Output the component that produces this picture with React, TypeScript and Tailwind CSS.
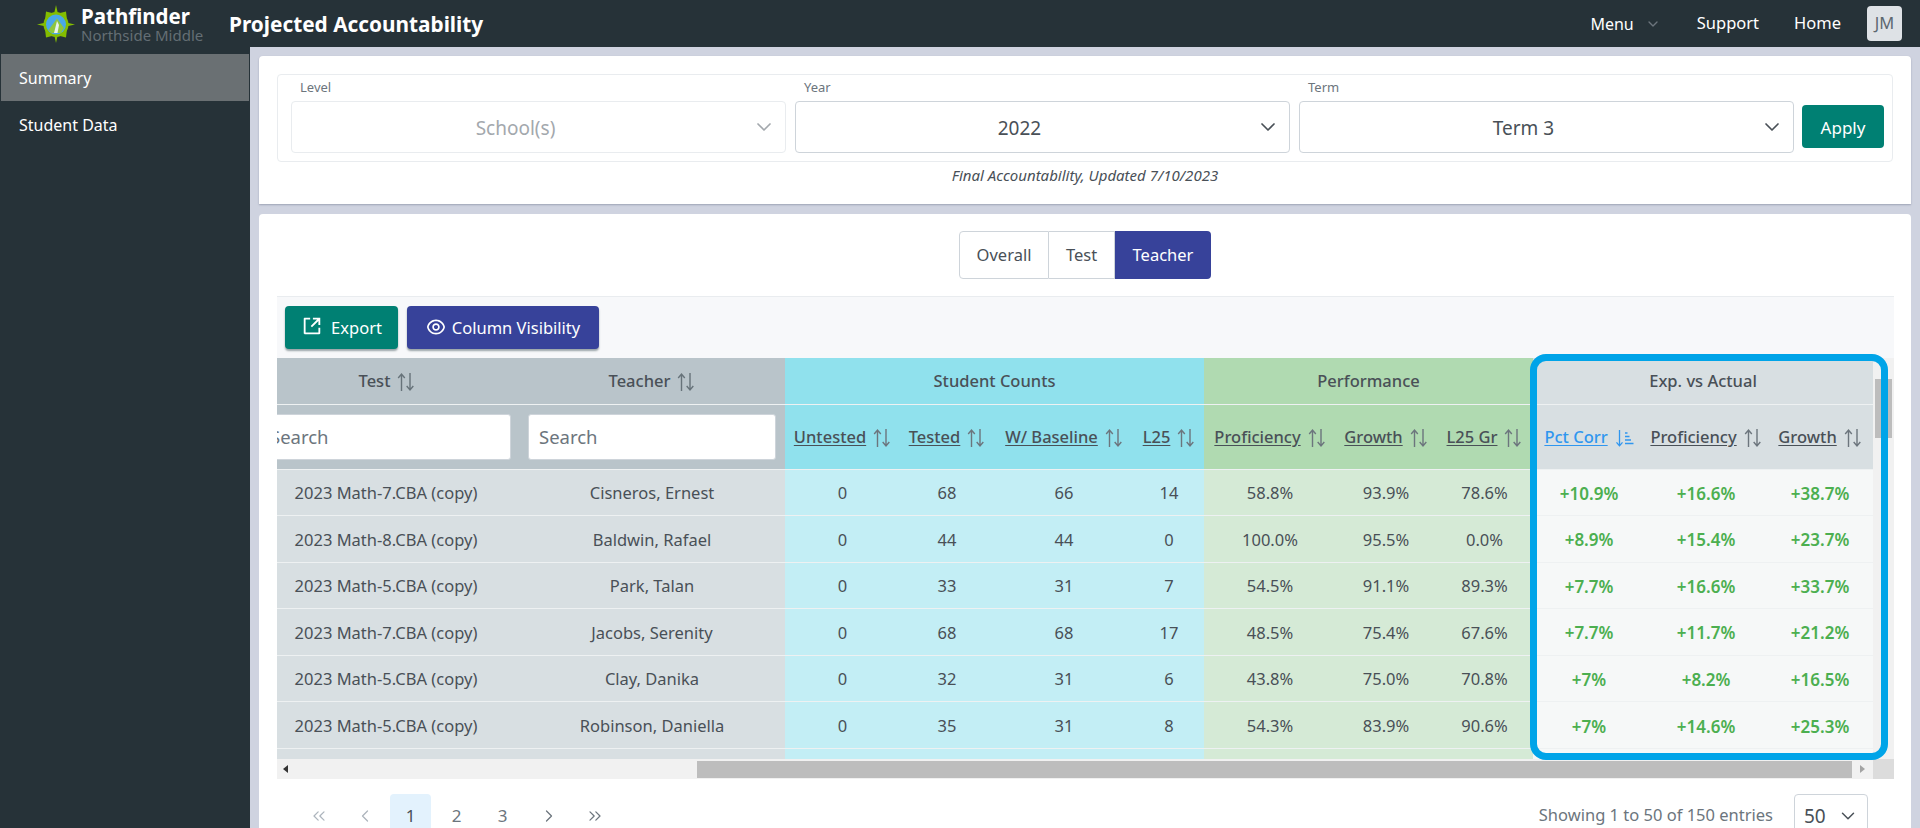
import React from "react";
import { ChevronDown, ChevronLeft, ChevronRight, ChevronsLeft, ChevronsRight } from "lucide-react";
import { RiShareBoxLine, RiEyeLine } from "react-icons/ri";

function SortIcon({ className = "text-[#6c757d]" }: { className?: string }) {
  return (
    <svg width="18" height="20" viewBox="0 0 18 20" fill="none" stroke="currentColor" strokeWidth="1.4" className={className}>
      <path d="M4.500 19V2.500M1.200 6 4.500 2 7.800 6" />
      <path d="M13 1V17.500M9.700 14 13 18 16.300 14" />
    </svg>
  );
}

function SortedIcon() {
  return (
    <svg width="19" height="19" viewBox="0 0 19 19" fill="none" stroke="currentColor" strokeWidth="1.3" className="text-[#2f96ef]">
      <path d="M4.500 2V17.500M1.500 14.300 4.500 17.800 7.500 14.300" />
      <path d="M10 5H12.500M10 8.500H14.500M10 12H16M10 15.500H18.500" />
    </svg>
  );
}

function Logo() {
  return (
    <svg width="38" height="38" viewBox="0 0 38 38">
      <path d="M19 0 21 9H17Z M19 38 21 29H17Z M0 19.500 9 17.500V21.500Z M38 19.500 29 17.500V21.500Z" fill="#84bd00" />
      <path d="M9 6.500 15 8 8 15Z M29 6.500 23 8 30 15Z M9 32.500 15 31 8 24Z M29 32.500 23 31 30 24Z" fill="#84bd00" />
      <circle cx="19" cy="19.500" r="12.500" fill="#84bd00" />
      <circle cx="19" cy="19.500" r="10" fill="#4aa8e8" />
      <path d="M11.500 25 20 13.500 27 23 24 28H14.500Z" fill="#8fc63e" />
      <path d="M17 28 20 16 22 20 20.500 28Z" fill="#e8f2ef" />
    </svg>
  );
}

function Select({ label, value, muted }: { label: string; value: string; muted?: boolean }) {
  return (
    <div className="relative w-[495px] pt-[26px]">
      <span className="absolute left-[9px] top-[2px] text-[13px] leading-5 text-[#6c757d]">{label}</span>
      <div className={`relative flex h-[52px] items-center justify-center rounded border pt-[2px] pr-[46px] text-[19px] ${muted ? "border-[#e9ecef] text-[#a3a8ad]" : "border-[#ced4da] text-[#495057]"}`}>
        {value}
        <ChevronDown size={24} strokeWidth={1.7} className={`absolute right-[9px] top-[13px] ${muted ? "text-[#a3a8ad]" : "text-[#495057]"}`} />
      </div>
    </div>
  );
}

type Col = { w: number; label: string; sorted?: boolean };

const headerCols: Col[] = [
  { w: 115, label: "Untested" },
  { w: 94, label: "Tested" },
  { w: 140, label: "W/ Baseline" },
  { w: 70, label: "L25" },
  { w: 132, label: "Proficiency" },
  { w: 100, label: "Growth" },
  { w: 97, label: "L25 Gr" },
  { w: 112, label: "Pct Corr", sorted: true },
  { w: 122, label: "Proficiency" },
  { w: 106, label: "Growth" },
];

const rows = [
  ["2023 Math-7.CBA (copy)", "Cisneros, Ernest", "0", "68", "66", "14", "58.8%", "93.9%", "78.6%", "+10.9%", "+16.6%", "+38.7%"],
  ["2023 Math-8.CBA (copy)", "Baldwin, Rafael", "0", "44", "44", "0", "100.0%", "95.5%", "0.0%", "+8.9%", "+15.4%", "+23.7%"],
  ["2023 Math-5.CBA (copy)", "Park, Talan", "0", "33", "31", "7", "54.5%", "91.1%", "89.3%", "+7.7%", "+16.6%", "+33.7%"],
  ["2023 Math-7.CBA (copy)", "Jacobs, Serenity", "0", "68", "68", "17", "48.5%", "75.4%", "67.6%", "+7.7%", "+11.7%", "+21.2%"],
  ["2023 Math-5.CBA (copy)", "Clay, Danika", "0", "32", "31", "6", "43.8%", "75.0%", "70.8%", "+7%", "+8.2%", "+16.5%"],
  ["2023 Math-5.CBA (copy)", "Robinson, Daniella", "0", "35", "31", "8", "54.3%", "83.9%", "90.6%", "+7%", "+14.6%", "+25.3%"],
  ["", "", "", "", "", "", "", "", "", "", "", ""],
];

const bodyBg = (i: number) =>
  i < 2 ? "bg-[#d8dfe2]" : i < 6 ? "bg-[#c3eef5]" : i < 9 ? "bg-[#d5ead6]" : "bg-[#f6f8f8]";
const headBg = (i: number) => (i < 4 ? "bg-[#90e1ed]" : i < 7 ? "bg-[#b0dab1]" : "bg-[#d8dfe2]");

function DataTable() {
  return (
    <table className="w-[1596px] table-fixed border-collapse text-[16.500px] text-[#495057]">
      <colgroup>
        <col className="w-[242px]" />
        <col className="w-[266px]" />
        {headerCols.map((c, i) => (
          <col key={i} style={{ width: c.w }} />
        ))}
      </colgroup>
      <thead>
        <tr className="h-[46px] border-b border-[#eef1f2] text-[16.500px] font-medium">
          <th className="bg-[#b9c4ca] pt-[2px] pr-[22px] font-medium">
            <span className="inline-flex items-center gap-[7px]">Test <SortIcon className="text-[#67737a]" /></span>
          </th>
          <th className="bg-[#b9c4ca] pt-[2px] font-medium">
            <span className="inline-flex items-center gap-[7px]">Teacher <SortIcon className="text-[#67737a]" /></span>
          </th>
          <th colSpan={4} className="bg-[#90e1ed] pt-[2px] font-medium">Student Counts</th>
          <th colSpan={3} className="bg-[#b0dab1] pt-[2px] font-medium">Performance</th>
          <th colSpan={3} className="bg-[#d8dfe2] pt-[2px] font-medium">Exp. vs Actual</th>
        </tr>
        <tr className="h-[65px]">
          <th className="overflow-hidden bg-[#b9c4ca] pr-[9px]">
            <input readOnly placeholder="Search" className="ml-[-18px] block h-[46px] w-[252px] rounded-[3px] border border-[#ced4da] bg-white pl-[10px] text-[18.500px] font-normal outline-none placeholder:text-[#6c757d]" />
          </th>
          <th className="bg-[#b9c4ca] px-[9px]">
            <input readOnly placeholder="Search" className="block h-[46px] w-[248px] rounded-[3px] border border-[#ced4da] bg-white pl-[10px] text-[18.500px] font-normal outline-none placeholder:text-[#6c757d]" />
          </th>
          {headerCols.map((c, i) => (
            <th key={i} className={`${headBg(i)} pt-[2px] font-medium`}>
              <span className="inline-flex items-center justify-center gap-[7px] whitespace-nowrap">
                <span className={`underline underline-offset-2 ${c.sorted ? "text-[#2f96ef]" : ""}`}>{c.label}</span>
                {c.sorted ? <SortedIcon /> : <SortIcon />}
              </span>
            </th>
          ))}
        </tr>
      </thead>
      <tbody>
        {rows.map((r, ri) => (
          <tr key={ri} className="h-[46.600px] border-t border-[#eef1f2]">
            {r.map((v, i) => (
              <td key={i} className={`pt-[2px] text-center ${bodyBg(i)} ${i >= 9 ? "text-[17px] font-semibold text-[#4caf50]" : ""} ${i === 0 ? "pr-[24px]" : ""}`}>
                {v}
              </td>
            ))}
          </tr>
        ))}
      </tbody>
    </table>
  );
}

function PageNum({ children, active }: { children: React.ReactNode; active?: boolean }) {
  return (
    <span className={`flex h-[44px] w-[41px] items-center justify-center rounded text-[17px] ${active ? "bg-[#e3f2fd] text-[#495057]" : "text-[#6c757d]"}`}>
      {children}
    </span>
  );
}

export default function App() {
  return (
    <div className="flex h-[828px] flex-col overflow-hidden bg-[#263238] font-['Noto_Sans','Open_Sans',sans-serif]">
      <header className="flex h-[47px] shrink-0 items-center">
        <div className="flex w-[229px] items-center pl-[37px]">
          <Logo />
          <div className="ml-[6px] flex flex-col">
            <span className="text-[20.500px] leading-[23px] font-bold text-white">Pathfinder</span>
            <span className="text-[15px] leading-[15px] whitespace-nowrap text-[#646e74]">Northside Middle</span>
          </div>
        </div>
        <h1 className="pt-[3px] text-[20.800px] font-bold text-white">Projected Accountability</h1>
        <nav className="ml-auto flex items-center pr-[18px] text-[16.500px] text-white">
          <span className="text-[16px]">Menu</span>
          <ChevronDown size={16} className="ml-[11px] text-[#6c757d]" />
          <span className="ml-[36px]">Support</span>
          <span className="ml-[35px]">Home</span>
          <span className="ml-[26px] flex h-[35px] w-[35px] items-center justify-center rounded bg-[#dee2e6] text-[#5c6770]">JM</span>
        </nav>
      </header>
      <div className="flex min-h-0 flex-1">
        <aside className="w-[250px] shrink-0 pt-[7px] text-[16px] text-white">
          <div className="ml-px flex h-[47px] w-[248px] items-center bg-[#6a7073] pl-[18px]">Summary</div>
          <div className="flex h-[47px] items-center pl-[19px]">Student Data</div>
        </aside>
        <main className="min-w-0 flex-1 bg-[#cfd3e0] pt-[9px] pr-[9px] pl-[9px]">
          <section className="h-[148px] rounded-t bg-white px-[18px] pt-[18px] shadow-[0_1px_2px_#9ea3b5]">
            <div className="flex h-[88px] items-start gap-[9px] rounded border border-[#e9ecef] pl-[13px]">
              <Select label="Level" value="School(s)" muted />
              <Select label="Year" value="2022" />
              <Select label="Term" value="Term 3" />
              <button className="ml-[-1px] mt-[30px] flex h-[43px] w-[82px] items-center justify-center rounded bg-[#008073] pt-[2px] text-[17px] text-white">Apply</button>
            </div>
            <p className="mt-[3px] text-center text-[15px] leading-5 italic text-[#495057]">Final Accountability, Updated 7/10/2023</p>
          </section>
          <section className="mt-[10px] h-[700px] rounded-t bg-white px-[18px] pt-[17px]">
            <div className="flex justify-center">
              <div className="flex h-[48px] text-[16.500px] text-[#495057]">
                <span className="flex w-[90px] items-center justify-center rounded-l border border-[#ced4da]">Overall</span>
                <span className="flex w-[66px] items-center justify-center border-y border-r border-[#ced4da]">Test</span>
                <span className="flex w-[96px] items-center justify-center rounded-r bg-[#37429a] text-white">Teacher</span>
              </div>
            </div>
            <div className="relative mt-[17px] w-[1617px]">
              <div className="flex h-[62px] items-center gap-[9px] border-t border-[#e9ecef] bg-[#f7f8fa] pl-[8px]">
                <button className="flex h-[43px] w-[113px] items-center justify-center gap-[8px] rounded bg-[#008073] pt-[2px] text-[16.500px] text-white shadow-[0_2px_2px_#9aa5a8]">
                  <RiShareBoxLine size={22} className="mb-[5px]" /> Export
                </button>
                <button className="flex h-[43px] w-[192px] items-center justify-center gap-[6px] rounded bg-[#37429a] pt-[2px] text-[16.500px] text-white shadow-[0_2px_2px_#9aa5a8]">
                  <RiEyeLine size={20} className="mb-[4px]" /> Column Visibility
                </button>
              </div>
              <div className="flex h-[401px] bg-[#f1f1f1]">
                <div className="w-[1596px] shrink-0 overflow-hidden">
                  <DataTable />
                </div>
                <div className="relative flex-1">
                  <div className="absolute top-[21px] right-[2px] left-[2px] h-[59px] bg-[#bdbdbd]" />
                </div>
              </div>
              <div className="flex h-[20px] items-center bg-[#f1f1f1]">
                <span className="ml-[6px] h-0 w-0 border-y-[4px] border-r-[5px] border-y-transparent border-r-[#333]" />
                <div className="ml-[409px] h-[17px] w-[1155px] bg-[#bdbdbd]" />
                <span className="ml-[8px] h-0 w-0 border-y-[4px] border-l-[5px] border-y-transparent border-l-[#a3a3a3]" />
                <div className="ml-auto h-full w-[21px] bg-[#dcdcdc]" />
              </div>
              <div className="pointer-events-none absolute top-[58px] left-[1253px] h-[406px] w-[358px] rounded-[16px] border-[7px] border-[#00a4e8]" />
              <div className="mt-[15px] flex items-start">
                <div className="ml-[21px] flex items-center gap-[5px]">
                  <PageNum><ChevronsLeft size={20} strokeWidth={1.5} className="text-[#adb5bd]" /></PageNum>
                  <PageNum><ChevronLeft size={20} strokeWidth={1.5} className="text-[#adb5bd]" /></PageNum>
                  <PageNum active>1</PageNum>
                  <PageNum>2</PageNum>
                  <PageNum>3</PageNum>
                  <PageNum><ChevronRight size={20} strokeWidth={1.5} /></PageNum>
                  <PageNum><ChevronsRight size={20} strokeWidth={1.5} /></PageNum>
                </div>
                <span className="ml-auto mt-[9px] text-[16.500px] text-[#6c757d]">Showing 1 to 50 of 150 entries</span>
                <div className="ml-[21px] mr-[26px] flex h-[44px] w-[74px] items-center justify-between rounded border border-[#ced4da] pr-[8px] pl-[9px] text-[19px] text-[#495057]">
                  50 <ChevronDown size={22} strokeWidth={1.6} />
                </div>
              </div>
            </div>
          </section>
        </main>
      </div>
    </div>
  );
}
